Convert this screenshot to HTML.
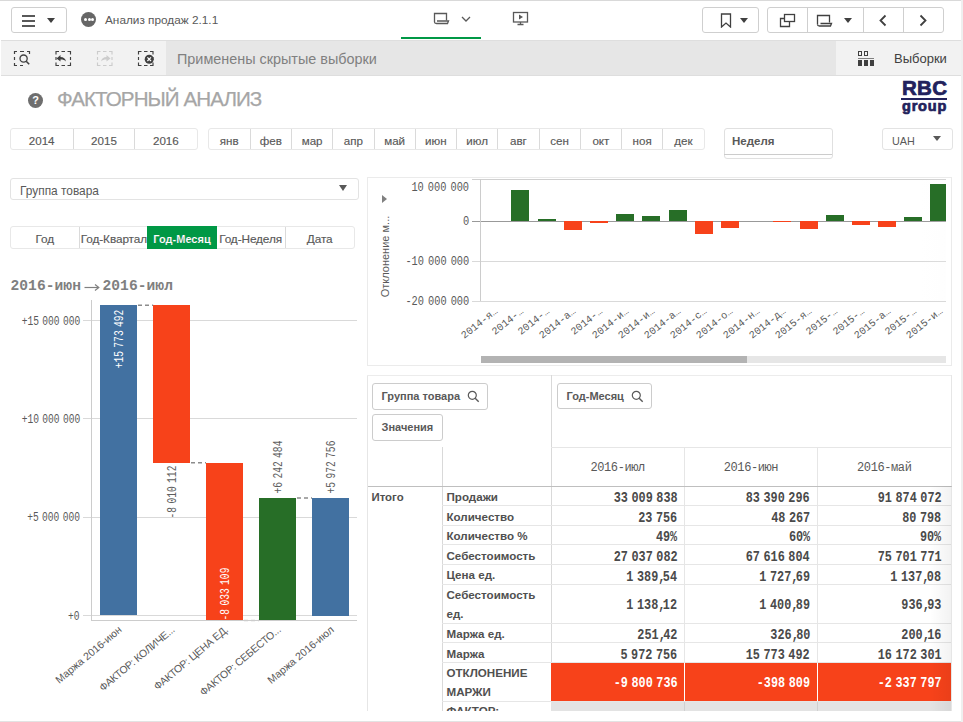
<!DOCTYPE html>
<html><head><meta charset="utf-8">
<style>
*{box-sizing:border-box}
html,body{margin:0;padding:0;width:963px;height:722px;overflow:hidden;background:#fff;font-family:"Liberation Sans",sans-serif;color:#404040}
.a{position:absolute}
.t{position:absolute;white-space:nowrap;line-height:1}
.btn{position:absolute;border:1px solid #cfcfcf;border-radius:3px;background:#fff}
.tri{position:absolute;width:0;height:0;border-left:4px solid transparent;border-right:4px solid transparent;border-top:5px solid #404040}
.seg{position:absolute;border:1px solid #e8e8e8;border-radius:3px;background:#fff;display:flex}
.seg div{height:100%;text-align:center;font-size:11.6px;color:#595959;border-left:1px solid #dadada;-webkit-text-stroke:0.15px #595959;line-height:24px}
.seg div:first-child{border-left:none}
.mono{font-family:"Liberation Mono",monospace}
</style></head>
<body>
<!-- top bar -->
<div class="a" style="left:0;top:0;width:963px;height:1px;background:#d9d9d9"></div>
<div class="btn" style="left:11px;top:7px;width:56px;height:26px"></div>
<div class="a" style="left:22px;top:15px;width:13px;height:2px;background:#595959"></div>
<div class="a" style="left:22px;top:20px;width:13px;height:2px;background:#595959"></div>
<div class="a" style="left:22px;top:25px;width:13px;height:2px;background:#595959"></div>
<div class="tri" style="left:47px;top:18px"></div>
<div class="a" style="left:81px;top:12px;width:15px;height:15px;border-radius:50%;background:#666"></div>
<div class="a" style="left:84px;top:18px;width:3px;height:3px;border-radius:50%;background:#fff"></div>
<div class="a" style="left:87px;top:18px;width:3px;height:3px;border-radius:50%;background:#fff;margin-left:0.5px"></div>
<div class="a" style="left:91px;top:18px;width:3px;height:3px;border-radius:50%;background:#fff"></div>
<div class="t" style="left:105px;top:15px;font-size:11.8px;color:#595959">Анализ продаж 2.1.1</div>

<!-- sheet tab -->
<svg class="a" style="left:433px;top:12px" width="18" height="13" viewBox="0 0 18 13"><path d="M1.5 10V1.5h12v7" fill="none" stroke="#595959" stroke-width="1.3"/><path d="M1.5 10c0 1 1 1.5 2 1.5h11l1-2.5h-11.5" fill="none" stroke="#595959" stroke-width="1.3"/></svg>
<svg class="a" style="left:461px;top:16px" width="10" height="7" viewBox="0 0 10 7"><path d="M1 1l4 4 4-4" fill="none" stroke="#595959" stroke-width="1.3"/></svg>
<div class="a" style="left:401px;top:37px;width:80px;height:2px;background:#009845"></div>
<svg class="a" style="left:512px;top:11px" width="17" height="15" viewBox="0 0 17 15"><rect x="1.5" y="1.5" width="14" height="9.5" fill="none" stroke="#595959" stroke-width="1.3"/><path d="M7 3.5v5l4-2.5z" fill="#595959"/><path d="M8.5 11v2M5.5 13.5h6" stroke="#595959" stroke-width="1.3"/></svg>

<!-- right buttons -->
<div class="btn" style="left:702px;top:7px;width:57px;height:26px"></div>
<svg class="a" style="left:720px;top:13px" width="12" height="15" viewBox="0 0 12 15"><path d="M1.5 1h9v13l-4.5-4-4.5 4z" fill="none" stroke="#404040" stroke-width="1.3"/></svg>
<div class="tri" style="left:740px;top:18px"></div>
<div class="btn" style="left:767px;top:7px;width:177px;height:26px"></div>
<div class="a" style="left:807px;top:7px;width:1px;height:26px;background:#cfcfcf"></div>
<div class="a" style="left:863px;top:7px;width:1px;height:26px;background:#cfcfcf"></div>
<div class="a" style="left:903px;top:7px;width:1px;height:26px;background:#cfcfcf"></div>
<svg class="a" style="left:779px;top:13px" width="17" height="15" viewBox="0 0 17 15"><rect x="5.5" y="1.5" width="10" height="7" fill="none" stroke="#404040" stroke-width="1.3"/><path d="M5.5 5.5h-4v8h9v-5" fill="none" stroke="#404040" stroke-width="1.3"/></svg>
<svg class="a" style="left:816px;top:14px" width="18" height="13" viewBox="0 0 18 13"><path d="M1.5 10.5V1.5h12v7" fill="none" stroke="#404040" stroke-width="1.3"/><path d="M1.5 10.5c0 1 1 1.5 2 1.5h11l1-2.5h-11" fill="none" stroke="#404040" stroke-width="1.3"/></svg>
<div class="tri" style="left:844px;top:18px"></div>
<svg class="a" style="left:878px;top:14px" width="10" height="13" viewBox="0 0 10 13"><path d="M7.5 1.5l-5 5 5 5" fill="none" stroke="#404040" stroke-width="1.8"/></svg>
<svg class="a" style="left:918px;top:14px" width="10" height="13" viewBox="0 0 10 13"><path d="M2.5 1.5l5 5-5 5" fill="none" stroke="#404040" stroke-width="1.8"/></svg>

<!-- toolbar -->
<div class="a" style="left:1px;top:40px;width:960px;height:36px;background:#f2f2f2;border-top:1px solid #dedede;border-bottom:1px solid #dedede"></div>
<div class="a" style="left:166px;top:41px;width:670px;height:34px;background:#e6e6e6"></div>
<div class="t" style="left:177px;top:51.8px;font-size:14.4px;color:#808080">Применены скрытые выборки</div>
<svg class="a" style="left:0;top:40px" width="170" height="36" viewBox="0 40 170 36">
<path d="M14.5 54V51.5H17M20 51.5h4M27 51.5h2.5V54M14.5 57v3M14.5 63v2.5H17M20 65.5h3" fill="none" stroke="#404040" stroke-width="1.2"/>
<circle cx="23.6" cy="58.6" r="3.6" fill="none" stroke="#404040" stroke-width="1.3"/><path d="M26.2 61.2l3 3" stroke="#404040" stroke-width="1.6"/>
<path transform="translate(55.5 51)" d="M0.5 3.5V0.5H3.5M6 0.5h3.5M12 0.5h3V3.5M15 6v3M15 11.5v3h-3M9.5 14.5H6M3.5 14.5h-3v-3M0.5 9V6" fill="none" stroke="#404040" stroke-width="1.15"/>
<path d="M56.5 58.5l4-3.5v2c3 0 5 1.5 5.5 4.5-1.2-1.4-3-2-5.5-2v2z" fill="#404040"/>
<path transform="translate(97 51)" d="M0.5 3.5V0.5H3.5M6 0.5h3.5M12 0.5h3V3.5M15 6v3M15 11.5v3h-3M9.5 14.5H6M3.5 14.5h-3v-3M0.5 9V6" fill="none" stroke="#cccccc" stroke-width="1.15"/>
<path d="M110.5 58.5l-4-3.5v2c-3 0-5 1.5-5.5 4.5 1.2-1.4 3-2 5.5-2v2z" fill="#cccccc"/>
<path transform="translate(138 51)" d="M0.5 3.5V0.5H3.5M6 0.5h3.5M12 0.5h3V3.5M15 6v3M15 11.5v3h-3M9.5 14.5H6M3.5 14.5h-3v-3M0.5 9V6" fill="none" stroke="#404040" stroke-width="1.15"/>
<circle cx="149.2" cy="59.2" r="4.5" fill="#404040"/><path d="M147.4 57.4l3.6 3.6M151 57.4l-3.6 3.6" stroke="#fff" stroke-width="1.2"/>
</svg>
<svg class="a" style="left:857px;top:50px" width="18" height="17" viewBox="0 0 18 17">
<rect x="1.5" y="1.5" width="3" height="4" fill="none" stroke="#404040" stroke-width="1"/>
<rect x="7.5" y="1.5" width="3" height="4" fill="none" stroke="#404040" stroke-width="1"/>
<rect x="1" y="8" width="16" height="1" fill="#808080"/>
<rect x="1" y="10" width="4" height="6" fill="#404040"/><rect x="7" y="10" width="4" height="6" fill="#404040"/><rect x="13" y="10" width="4" height="6" fill="#404040"/>
</svg>
<div class="t" style="left:894px;top:52px;font-size:13px;color:#404040">Выборки</div>

<div class="a" style="left:28px;top:93px;width:15px;height:15px;border-radius:50%;background:#6e6e6e;color:#fff;font-weight:bold;font-size:11px;line-height:15px;text-align:center">?</div>
<div class="t" style="left:57px;top:88.5px;font-size:20.6px;color:#a6a6a6;letter-spacing:-0.95px;-webkit-text-stroke:0.25px #a6a6a6">ФАКТОРНЫЙ АНАЛИЗ</div>
<div class="t" style="left:902px;top:77.5px;font-size:20.5px;font-weight:bold;color:#22225c;letter-spacing:0.3px;-webkit-text-stroke:0.7px #22225c">RBC</div>
<div class="a" style="left:901px;top:97.8px;width:45.5px;height:2.6px;background:#22225c"></div>
<div class="t" style="left:902px;top:98.8px;font-size:14.5px;font-weight:bold;color:#22225c;letter-spacing:0.8px;-webkit-text-stroke:0.7px #22225c">group</div>
<div class="seg" style="left:9.5px;top:128px;width:188px;height:22px"><div style="width:63px">2014</div><div style="width:62px">2015</div><div style="width:63px">2016</div></div>
<div class="seg" style="left:207.5px;top:128px;width:497px;height:22px"><div style="width:41.4px">янв</div><div style="width:41.4px">фев</div><div style="width:41.4px">мар</div><div style="width:41.4px">апр</div><div style="width:41.4px">май</div><div style="width:41.4px">июн</div><div style="width:41.4px">июл</div><div style="width:41.4px">авг</div><div style="width:41.4px">сен</div><div style="width:41.4px">окт</div><div style="width:41.4px">ноя</div><div style="width:41.4px">дек</div></div>
<div class="a" style="left:723.5px;top:128px;width:109px;height:30.5px;border:1px solid #e0e0e0;border-radius:3px"></div>
<div class="a" style="left:724px;top:153.5px;width:108px;height:1px;background:#cccccc"></div>
<div class="t" style="left:732px;top:136px;font-size:11.5px;font-weight:bold;color:#595959">Неделя</div>
<div class="a" style="left:881.5px;top:128px;width:71px;height:22px;border:1px solid #e3e3e3;border-radius:3px"></div>
<div class="t" style="left:892px;top:135.5px;font-size:10.8px;color:#595959">UAH</div>
<div class="tri" style="left:933px;top:135.5px;border-left-width:4.5px;border-right-width:4.5px;border-top-width:5.5px;border-top-color:#595959"></div>
<div class="a" style="left:9.5px;top:177.5px;width:349px;height:22px;border:1px solid #e3e3e3;border-radius:3px"></div>
<div class="t" style="left:20px;top:185.5px;font-size:11.9px;color:#595959">Группа товара</div>
<div class="tri" style="left:339px;top:185px;border-left-width:4.5px;border-right-width:4.5px;border-top-width:6px;border-top-color:#595959"></div>
<div class="seg" style="left:9.5px;top:226px;width:345px;height:22.5px"><div style="width:69px;font-size:11.8px;letter-spacing:-0.1px;">Год</div><div style="width:69px;font-size:11.8px;letter-spacing:-0.1px;">Год-Квартал</div><div style="width:69px;color:#fff;font-weight:bold;font-size:11px;border-left:none;position:relative"><span style="position:absolute;left:-1px;top:-1px;width:70px;height:22.5px;background:#009845"></span><span style="position:relative">Год-Месяц</span></div><div style="width:69px;font-size:11.8px;letter-spacing:-0.1px;border-left:none">Год-Неделя</div><div style="width:69px;font-size:11.8px;letter-spacing:-0.1px;">Дата</div></div>
<div class="t mono" style="left:10.5px;top:279px;font-size:14.6px;font-weight:bold;color:#808080;letter-spacing:0.05px">2016-июн</div>
<svg class="a" style="left:84px;top:283px" width="16" height="9" viewBox="0 0 16 9"><path d="M0.5 4.5h14" stroke="#808080" stroke-width="1.2"/><path d="M11 1.5l3.8 3-3.8 3" fill="none" stroke="#808080" stroke-width="1.2"/></svg>
<div class="t mono" style="left:102.5px;top:279px;font-size:14.6px;font-weight:bold;color:#808080;letter-spacing:0.05px">2016-июл</div>
<div class="a" style="left:83px;top:320.0px;width:274px;height:1px;background:#d9d9d9"></div>
<div class="t mono" style="right:883.2px;top:316.5px;font-size:12px;line-height:10px;color:#595959;word-spacing:-3px;transform:scaleX(0.8);transform-origin:100% 50%">+15 000 000</div>
<div class="a" style="left:83px;top:418.3px;width:274px;height:1px;background:#d9d9d9"></div>
<div class="t mono" style="right:883.2px;top:414.8px;font-size:12px;line-height:10px;color:#595959;word-spacing:-3px;transform:scaleX(0.8);transform-origin:100% 50%">+10 000 000</div>
<div class="a" style="left:83px;top:516.7px;width:274px;height:1px;background:#d9d9d9"></div>
<div class="t mono" style="right:883.2px;top:513.2px;font-size:12px;line-height:10px;color:#595959;word-spacing:-3px;transform:scaleX(0.8);transform-origin:100% 50%">+5 000 000</div>
<div class="a" style="left:83px;top:615.0px;width:274px;height:1px;background:#d9d9d9"></div>
<div class="t mono" style="right:883.2px;top:611.5px;font-size:12px;line-height:10px;color:#595959;word-spacing:-3px;transform:scaleX(0.8);transform-origin:100% 50%">+0</div>
<div class="a" style="left:91px;top:300px;width:1px;height:321px;background:#cccccc"></div>
<div class="a" style="left:91px;top:620px;width:266px;height:1px;background:#cccccc"></div>
<div class="a" style="left:100.2px;top:305.3px;width:36.8px;height:310.2px;background:#4271a1"></div>
<div class="a" style="left:153.2px;top:305.3px;width:36.8px;height:157.5px;background:#f7421a"></div>
<div class="a" style="left:206.0px;top:462.8px;width:36.8px;height:157.2px;background:#f7421a"></div>
<div class="a" style="left:259.2px;top:498.0px;width:36.8px;height:122.0px;background:#276e27"></div>
<div class="a" style="left:312.0px;top:498.0px;width:36.8px;height:117.5px;background:#4271a1"></div>
<svg class="a" style="left:0;top:0" width="963" height="722"><line x1="138" y1="305.3" x2="153.2" y2="305.3" stroke="#8c8c8c" stroke-width="1.5" stroke-dasharray="4 3"/><line x1="191" y1="462.8" x2="206" y2="462.8" stroke="#8c8c8c" stroke-width="1.5" stroke-dasharray="4 3"/><line x1="297" y1="498.0" x2="312" y2="498.0" stroke="#8c8c8c" stroke-width="1.5" stroke-dasharray="4 3"/><line x1="244" y1="620.5" x2="259" y2="620.5" stroke="#cccccc" stroke-width="1.5" stroke-dasharray="4 3"/></svg>
<div class="t mono" style="left:70.4px;top:334.0px;width:100px;text-align:center;font-size:12px;line-height:10px;color:#fff;transform:rotate(-90deg) scaleX(0.8);word-spacing:-3px">+15 773 492</div>
<div class="t mono" style="left:123.4px;top:486.5px;width:100px;text-align:center;font-size:12px;line-height:10px;color:#5e5e5e;transform:rotate(-90deg) scaleX(0.8);word-spacing:-3px">-8 010 112</div>
<div class="t mono" style="left:176.2px;top:588.5px;width:100px;text-align:center;font-size:12px;line-height:10px;color:#fff;transform:rotate(-90deg) scaleX(0.8);word-spacing:-3px">-8 033 109</div>
<div class="t mono" style="left:229.4px;top:461.8px;width:100px;text-align:center;font-size:12px;line-height:10px;color:#5e5e5e;transform:rotate(-90deg) scaleX(0.8);word-spacing:-3px">+6 242 484</div>
<div class="t mono" style="left:282.3px;top:461.8px;width:100px;text-align:center;font-size:12px;line-height:10px;color:#5e5e5e;transform:rotate(-90deg) scaleX(0.8);word-spacing:-3px">+5 972 756</div>
<div class="t" style="right:846.4px;top:623.5px;font-size:10.5px;line-height:10px;color:#595959;letter-spacing:0;transform-origin:100% 0;transform:rotate(-40deg)">Маржа 2016-июн</div>
<div class="t" style="right:793.4px;top:623.5px;font-size:10.5px;line-height:10px;color:#595959;letter-spacing:-0.25px;transform-origin:100% 0;transform:rotate(-40deg)">ФАКТОР: КОЛИЧЕ...</div>
<div class="t" style="right:740.4px;top:623.5px;font-size:10.5px;line-height:10px;color:#595959;letter-spacing:-0.25px;transform-origin:100% 0;transform:rotate(-40deg)">ФАКТОР: ЦЕНА ЕД.</div>
<div class="t" style="right:687.4px;top:623.5px;font-size:10.5px;line-height:10px;color:#595959;letter-spacing:-0.25px;transform-origin:100% 0;transform:rotate(-40deg)">ФАКТОР: СЕБЕСТО...</div>
<div class="t" style="right:634.4px;top:623.5px;font-size:10.5px;line-height:10px;color:#595959;letter-spacing:0;transform-origin:100% 0;transform:rotate(-40deg)">Маржа 2016-июл</div>
<div class="a" style="left:367px;top:177px;width:585px;height:189px;border:1px solid #ebebeb"></div>
<div class="a" style="left:382px;top:195px;width:0;height:0;border-top:4px solid transparent;border-bottom:4px solid transparent;border-left:5.5px solid #808080"></div>
<div class="t" style="left:334.5px;top:251px;width:100px;text-align:center;font-size:11px;line-height:11px;color:#595959;transform:rotate(-90deg)">Отклонение м...</div>
<div class="t mono" style="right:493.8px;top:182.8px;font-size:12px;line-height:10px;color:#595959;word-spacing:-2.5px;transform:scaleX(0.86);transform-origin:100% 50%">10 000 000</div>
<div class="t mono" style="right:493.8px;top:217.0px;font-size:12px;line-height:10px;color:#595959;word-spacing:-2.5px;transform:scaleX(0.86);transform-origin:100% 50%">0</div>
<div class="a" style="left:472px;top:220.7px;width:474px;height:1px;background:#999"></div>
<div class="t mono" style="right:493.8px;top:257.0px;font-size:12px;line-height:10px;color:#595959;word-spacing:-2.5px;transform:scaleX(0.86);transform-origin:100% 50%">-10 000 000</div>
<div class="a" style="left:472px;top:260.7px;width:474px;height:1px;background:#d9d9d9"></div>
<div class="t mono" style="right:493.8px;top:297.0px;font-size:12px;line-height:10px;color:#595959;word-spacing:-2.5px;transform:scaleX(0.86);transform-origin:100% 50%">-20 000 000</div>
<div class="a" style="left:472px;top:300.7px;width:474px;height:1px;background:#d9d9d9"></div>
<div class="a" style="left:472px;top:179px;width:474px;height:1px;background:#d0d0d0"></div>
<div class="a" style="left:480px;top:179px;width:1px;height:122px;background:#cccccc"></div>
<div class="a" style="left:920px;top:179px;width:26px;height:122px;background:linear-gradient(to right,rgba(255,255,255,0),rgba(245,245,245,0.12))"></div>
<div class="a" style="left:511.3px;top:190px;width:18.2px;height:31.2px;background:#276e27"></div>
<div class="a" style="left:537.5px;top:219px;width:18.2px;height:2.2px;background:#276e27"></div>
<div class="a" style="left:563.7px;top:221.2px;width:18.2px;height:9.1px;background:#f7421a"></div>
<div class="a" style="left:589.9px;top:221.2px;width:18.2px;height:1.8px;background:#f7421a"></div>
<div class="a" style="left:616.1px;top:214px;width:18.2px;height:7.2px;background:#276e27"></div>
<div class="a" style="left:642.3px;top:215.8px;width:18.2px;height:5.4px;background:#276e27"></div>
<div class="a" style="left:668.5px;top:210.3px;width:18.2px;height:10.9px;background:#276e27"></div>
<div class="a" style="left:694.7px;top:221.2px;width:18.2px;height:13.0px;background:#f7421a"></div>
<div class="a" style="left:720.9px;top:221.2px;width:18.2px;height:6.5px;background:#f7421a"></div>
<div class="a" style="left:773.3px;top:221.2px;width:18.2px;height:0.8px;background:#f7421a"></div>
<div class="a" style="left:799.5px;top:221.2px;width:18.2px;height:7.6px;background:#f7421a"></div>
<div class="a" style="left:825.7px;top:214.6px;width:18.2px;height:6.6px;background:#276e27"></div>
<div class="a" style="left:851.9px;top:221.2px;width:18.2px;height:3.5px;background:#f7421a"></div>
<div class="a" style="left:878.1px;top:221.2px;width:18.2px;height:5.7px;background:#f7421a"></div>
<div class="a" style="left:904.3px;top:217.3px;width:18.2px;height:3.9px;background:#276e27"></div>
<div class="a" style="left:930.0px;top:183.7px;width:16px;height:37.5px;background:#276e27"></div>
<div class="t mono" style="right:470.3px;top:305.5px;font-size:10.3px;line-height:10px;color:#595959;transform-origin:100% 0;transform:rotate(-38.5deg)">2014-я<span style="font-family:'Liberation Sans';font-size:9px;letter-spacing:-0.5px">...</span></div>
<div class="t mono" style="right:444.1px;top:305.5px;font-size:10.3px;line-height:10px;color:#595959;transform-origin:100% 0;transform:rotate(-38.5deg)">2014-<span style="font-family:'Liberation Sans';font-size:9px;letter-spacing:-0.5px">...</span></div>
<div class="t mono" style="right:417.9px;top:305.5px;font-size:10.3px;line-height:10px;color:#595959;transform-origin:100% 0;transform:rotate(-38.5deg)">2014-<span style="font-family:'Liberation Sans';font-size:9px;letter-spacing:-0.5px">...</span></div>
<div class="t mono" style="right:391.7px;top:305.5px;font-size:10.3px;line-height:10px;color:#595959;transform-origin:100% 0;transform:rotate(-38.5deg)">2014-а<span style="font-family:'Liberation Sans';font-size:9px;letter-spacing:-0.5px">...</span></div>
<div class="t mono" style="right:365.5px;top:305.5px;font-size:10.3px;line-height:10px;color:#595959;transform-origin:100% 0;transform:rotate(-38.5deg)">2014-<span style="font-family:'Liberation Sans';font-size:9px;letter-spacing:-0.5px">...</span></div>
<div class="t mono" style="right:339.3px;top:305.5px;font-size:10.3px;line-height:10px;color:#595959;transform-origin:100% 0;transform:rotate(-38.5deg)">2014-и<span style="font-family:'Liberation Sans';font-size:9px;letter-spacing:-0.5px">...</span></div>
<div class="t mono" style="right:313.1px;top:305.5px;font-size:10.3px;line-height:10px;color:#595959;transform-origin:100% 0;transform:rotate(-38.5deg)">2014-и<span style="font-family:'Liberation Sans';font-size:9px;letter-spacing:-0.5px">...</span></div>
<div class="t mono" style="right:286.9px;top:305.5px;font-size:10.3px;line-height:10px;color:#595959;transform-origin:100% 0;transform:rotate(-38.5deg)">2014-а<span style="font-family:'Liberation Sans';font-size:9px;letter-spacing:-0.5px">...</span></div>
<div class="t mono" style="right:260.7px;top:305.5px;font-size:10.3px;line-height:10px;color:#595959;transform-origin:100% 0;transform:rotate(-38.5deg)">2014-с<span style="font-family:'Liberation Sans';font-size:9px;letter-spacing:-0.5px">...</span></div>
<div class="t mono" style="right:234.5px;top:305.5px;font-size:10.3px;line-height:10px;color:#595959;transform-origin:100% 0;transform:rotate(-38.5deg)">2014-о<span style="font-family:'Liberation Sans';font-size:9px;letter-spacing:-0.5px">...</span></div>
<div class="t mono" style="right:208.3px;top:305.5px;font-size:10.3px;line-height:10px;color:#595959;transform-origin:100% 0;transform:rotate(-38.5deg)">2014-н<span style="font-family:'Liberation Sans';font-size:9px;letter-spacing:-0.5px">...</span></div>
<div class="t mono" style="right:182.1px;top:305.5px;font-size:10.3px;line-height:10px;color:#595959;transform-origin:100% 0;transform:rotate(-38.5deg)">2014-д<span style="font-family:'Liberation Sans';font-size:9px;letter-spacing:-0.5px">...</span></div>
<div class="t mono" style="right:155.9px;top:305.5px;font-size:10.3px;line-height:10px;color:#595959;transform-origin:100% 0;transform:rotate(-38.5deg)">2015-я<span style="font-family:'Liberation Sans';font-size:9px;letter-spacing:-0.5px">...</span></div>
<div class="t mono" style="right:129.7px;top:305.5px;font-size:10.3px;line-height:10px;color:#595959;transform-origin:100% 0;transform:rotate(-38.5deg)">2015-<span style="font-family:'Liberation Sans';font-size:9px;letter-spacing:-0.5px">...</span></div>
<div class="t mono" style="right:103.5px;top:305.5px;font-size:10.3px;line-height:10px;color:#595959;transform-origin:100% 0;transform:rotate(-38.5deg)">2015-<span style="font-family:'Liberation Sans';font-size:9px;letter-spacing:-0.5px">...</span></div>
<div class="t mono" style="right:77.3px;top:305.5px;font-size:10.3px;line-height:10px;color:#595959;transform-origin:100% 0;transform:rotate(-38.5deg)">2015-а<span style="font-family:'Liberation Sans';font-size:9px;letter-spacing:-0.5px">...</span></div>
<div class="t mono" style="right:51.1px;top:305.5px;font-size:10.3px;line-height:10px;color:#595959;transform-origin:100% 0;transform:rotate(-38.5deg)">2015-<span style="font-family:'Liberation Sans';font-size:9px;letter-spacing:-0.5px">...</span></div>
<div class="t mono" style="right:24.9px;top:305.5px;font-size:10.3px;line-height:10px;color:#595959;transform-origin:100% 0;transform:rotate(-38.5deg)">2015-и<span style="font-family:'Liberation Sans';font-size:9px;letter-spacing:-0.5px">...</span></div>
<div class="a" style="left:481px;top:355.5px;width:465px;height:7.5px;background:#e6e6e6"></div>
<div class="a" style="left:481px;top:355.5px;width:266px;height:7.5px;background:#b3b3b3"></div>
<div class="a" style="left:367px;top:374.5px;width:1px;height:337px;background:#e6e6e6"></div>
<div class="a" style="left:367px;top:374.5px;width:585px;height:1px;background:#ececec"></div>
<div class="a" style="left:372px;top:383px;width:115.5px;height:26.5px;border:1px solid #cccccc;border-radius:3px;background:#fff"></div>
<div class="t" style="left:381.5px;top:391px;font-size:11px;font-weight:bold;color:#595959">Группа товара</div>
<svg class="a" style="left:466.5px;top:389.5px" width="13" height="13" viewBox="0 0 13 13"><circle cx="5.3" cy="5.3" r="4" fill="none" stroke="#595959" stroke-width="1.2"/><path d="M8.2 8.2l3.5 3.5" stroke="#595959" stroke-width="1.4"/></svg>
<div class="a" style="left:372px;top:414px;width:71px;height:26.5px;border:1px solid #cccccc;border-radius:3px;background:#fff"></div>
<div class="t" style="left:381.5px;top:422px;font-size:11px;font-weight:bold;color:#595959">Значения</div>
<div class="a" style="left:557px;top:383px;width:94.5px;height:26px;border:1px solid #cccccc;border-radius:3px;background:#fff"></div>
<div class="t" style="left:566.5px;top:391px;font-size:11px;font-weight:bold;color:#595959">Год-Месяц</div>
<svg class="a" style="left:630.5px;top:389.5px" width="13" height="13" viewBox="0 0 13 13"><circle cx="5.3" cy="5.3" r="4" fill="none" stroke="#595959" stroke-width="1.2"/><path d="M8.2 8.2l3.5 3.5" stroke="#595959" stroke-width="1.4"/></svg>
<div class="a" style="left:550.5px;top:375px;width:1px;height:336px;background:#d9d9d9"></div>
<div class="a" style="left:442px;top:447px;width:1px;height:264px;background:#d9d9d9"></div>
<div class="a" style="left:551px;top:447.3px;width:400px;height:1px;background:#e6e6e6"></div>
<div class="a" style="left:684px;top:447.3px;width:1px;height:264px;background:#e6e6e6"></div>
<div class="a" style="left:817px;top:447.3px;width:1px;height:264px;background:#e6e6e6"></div>
<div class="a" style="left:951px;top:375px;width:1px;height:336px;background:#e6e6e6"></div>
<div class="a" style="left:367.5px;top:485.5px;width:584px;height:1px;background:#bfbfbf"></div>
<div class="t" style="left:551.0px;width:133.3px;text-align:center;top:461.5px;font-size:12px;color:#595959;font-family:'Liberation Mono';letter-spacing:-0.4px">2016-июл</div>
<div class="t" style="left:684.3px;width:133.3px;text-align:center;top:461.5px;font-size:12px;color:#595959;font-family:'Liberation Mono';letter-spacing:-0.4px">2016-июн</div>
<div class="t" style="left:817.6px;width:133.3px;text-align:center;top:461.5px;font-size:12px;color:#595959;font-family:'Liberation Mono';letter-spacing:-0.4px">2016-май</div>
<div class="t" style="left:371.5px;top:491.5px;font-size:11.4px;font-weight:bold;color:#505050">Итого</div>
<div class="t" style="left:446.5px;top:486.9px;font-size:11.6px;line-height:19px;font-weight:bold;color:#505050;white-space:normal;width:104px">Продажи</div>
<div class="t mono" style="right:285.7px;top:492.1px;font-size:14px;line-height:13px;font-weight:bold;color:#4a4a4a;word-spacing:-4.2px;transform:scaleX(0.845);transform-origin:100% 50%">33 009 838</div>
<div class="t mono" style="right:153.0px;top:492.1px;font-size:14px;line-height:13px;font-weight:bold;color:#4a4a4a;word-spacing:-4.2px;transform:scaleX(0.845);transform-origin:100% 50%">83 390 296</div>
<div class="t mono" style="right:21.7px;top:492.1px;font-size:14px;line-height:13px;font-weight:bold;color:#4a4a4a;word-spacing:-4.2px;transform:scaleX(0.845);transform-origin:100% 50%">91 874 072</div>
<div class="a" style="left:442px;top:505.1px;width:509px;height:1px;background:#e6e6e6"></div>
<div class="t" style="left:446.5px;top:506.5px;font-size:11.6px;line-height:19px;font-weight:bold;color:#505050;white-space:normal;width:104px">Количество</div>
<div class="t mono" style="right:285.7px;top:511.7px;font-size:14px;line-height:13px;font-weight:bold;color:#4a4a4a;word-spacing:-4.2px;transform:scaleX(0.845);transform-origin:100% 50%">23 756</div>
<div class="t mono" style="right:153.0px;top:511.7px;font-size:14px;line-height:13px;font-weight:bold;color:#4a4a4a;word-spacing:-4.2px;transform:scaleX(0.845);transform-origin:100% 50%">48 267</div>
<div class="t mono" style="right:21.7px;top:511.7px;font-size:14px;line-height:13px;font-weight:bold;color:#4a4a4a;word-spacing:-4.2px;transform:scaleX(0.845);transform-origin:100% 50%">80 798</div>
<div class="a" style="left:442px;top:524.7px;width:509px;height:1px;background:#e6e6e6"></div>
<div class="t" style="left:446.5px;top:526.1px;font-size:11.6px;line-height:19px;font-weight:bold;color:#505050;white-space:normal;width:104px">Количество %</div>
<div class="t mono" style="right:285.7px;top:531.3px;font-size:14px;line-height:13px;font-weight:bold;color:#4a4a4a;word-spacing:-4.2px;transform:scaleX(0.845);transform-origin:100% 50%">49%</div>
<div class="t mono" style="right:153.0px;top:531.3px;font-size:14px;line-height:13px;font-weight:bold;color:#4a4a4a;word-spacing:-4.2px;transform:scaleX(0.845);transform-origin:100% 50%">60%</div>
<div class="t mono" style="right:21.7px;top:531.3px;font-size:14px;line-height:13px;font-weight:bold;color:#4a4a4a;word-spacing:-4.2px;transform:scaleX(0.845);transform-origin:100% 50%">90%</div>
<div class="a" style="left:442px;top:544.3px;width:509px;height:1px;background:#e6e6e6"></div>
<div class="t" style="left:446.5px;top:545.7px;font-size:11.6px;line-height:19px;font-weight:bold;color:#505050;white-space:normal;width:104px">Себестоимость</div>
<div class="t mono" style="right:285.7px;top:550.9px;font-size:14px;line-height:13px;font-weight:bold;color:#4a4a4a;word-spacing:-4.2px;transform:scaleX(0.845);transform-origin:100% 50%">27 037 082</div>
<div class="t mono" style="right:153.0px;top:550.9px;font-size:14px;line-height:13px;font-weight:bold;color:#4a4a4a;word-spacing:-4.2px;transform:scaleX(0.845);transform-origin:100% 50%">67 616 804</div>
<div class="t mono" style="right:21.7px;top:550.9px;font-size:14px;line-height:13px;font-weight:bold;color:#4a4a4a;word-spacing:-4.2px;transform:scaleX(0.845);transform-origin:100% 50%">75 701 771</div>
<div class="a" style="left:442px;top:563.9px;width:509px;height:1px;background:#e6e6e6"></div>
<div class="t" style="left:446.5px;top:565.3px;font-size:11.6px;line-height:19px;font-weight:bold;color:#505050;white-space:normal;width:104px">Цена ед.</div>
<div class="t mono" style="right:285.7px;top:570.5px;font-size:14px;line-height:13px;font-weight:bold;color:#4a4a4a;word-spacing:-4.2px;transform:scaleX(0.845);transform-origin:100% 50%">1 389<span style='letter-spacing:-3px'>,</span>54</div>
<div class="t mono" style="right:153.0px;top:570.5px;font-size:14px;line-height:13px;font-weight:bold;color:#4a4a4a;word-spacing:-4.2px;transform:scaleX(0.845);transform-origin:100% 50%">1 727<span style='letter-spacing:-3px'>,</span>69</div>
<div class="t mono" style="right:21.7px;top:570.5px;font-size:14px;line-height:13px;font-weight:bold;color:#4a4a4a;word-spacing:-4.2px;transform:scaleX(0.845);transform-origin:100% 50%">1 137<span style='letter-spacing:-3px'>,</span>08</div>
<div class="a" style="left:442px;top:583.5px;width:509px;height:1px;background:#e6e6e6"></div>
<div class="t" style="left:446.5px;top:584.9px;font-size:11.6px;line-height:19px;font-weight:bold;color:#505050;white-space:normal;width:104px">Себестоимость<br>ед.</div>
<div class="t mono" style="right:285.7px;top:598.9px;font-size:14px;line-height:13px;font-weight:bold;color:#4a4a4a;word-spacing:-4.2px;transform:scaleX(0.845);transform-origin:100% 50%">1 138<span style='letter-spacing:-3px'>,</span>12</div>
<div class="t mono" style="right:153.0px;top:598.9px;font-size:14px;line-height:13px;font-weight:bold;color:#4a4a4a;word-spacing:-4.2px;transform:scaleX(0.845);transform-origin:100% 50%">1 400<span style='letter-spacing:-3px'>,</span>89</div>
<div class="t mono" style="right:21.7px;top:598.9px;font-size:14px;line-height:13px;font-weight:bold;color:#4a4a4a;word-spacing:-4.2px;transform:scaleX(0.845);transform-origin:100% 50%">936<span style='letter-spacing:-3px'>,</span>93</div>
<div class="a" style="left:442px;top:622.7px;width:509px;height:1px;background:#e6e6e6"></div>
<div class="t" style="left:446.5px;top:624.1px;font-size:11.6px;line-height:19px;font-weight:bold;color:#505050;white-space:normal;width:104px">Маржа ед.</div>
<div class="t mono" style="right:285.7px;top:629.3px;font-size:14px;line-height:13px;font-weight:bold;color:#4a4a4a;word-spacing:-4.2px;transform:scaleX(0.845);transform-origin:100% 50%">251<span style='letter-spacing:-3px'>,</span>42</div>
<div class="t mono" style="right:153.0px;top:629.3px;font-size:14px;line-height:13px;font-weight:bold;color:#4a4a4a;word-spacing:-4.2px;transform:scaleX(0.845);transform-origin:100% 50%">326<span style='letter-spacing:-3px'>,</span>80</div>
<div class="t mono" style="right:21.7px;top:629.3px;font-size:14px;line-height:13px;font-weight:bold;color:#4a4a4a;word-spacing:-4.2px;transform:scaleX(0.845);transform-origin:100% 50%">200<span style='letter-spacing:-3px'>,</span>16</div>
<div class="a" style="left:442px;top:642.3px;width:509px;height:1px;background:#e6e6e6"></div>
<div class="t" style="left:446.5px;top:643.7px;font-size:11.6px;line-height:19px;font-weight:bold;color:#505050;white-space:normal;width:104px">Маржа</div>
<div class="t mono" style="right:285.7px;top:648.9px;font-size:14px;line-height:13px;font-weight:bold;color:#4a4a4a;word-spacing:-4.2px;transform:scaleX(0.845);transform-origin:100% 50%">5 972 756</div>
<div class="t mono" style="right:153.0px;top:648.9px;font-size:14px;line-height:13px;font-weight:bold;color:#4a4a4a;word-spacing:-4.2px;transform:scaleX(0.845);transform-origin:100% 50%">15 773 492</div>
<div class="t mono" style="right:21.7px;top:648.9px;font-size:14px;line-height:13px;font-weight:bold;color:#4a4a4a;word-spacing:-4.2px;transform:scaleX(0.845);transform-origin:100% 50%">16 172 301</div>
<div class="a" style="left:551px;top:662.9px;width:400px;height:38.7px;background:#f7421a"></div>
<div class="a" style="left:684px;top:662.4px;width:1px;height:39.2px;background:#fff"></div>
<div class="a" style="left:817px;top:662.4px;width:1px;height:39.2px;background:#fff"></div>
<div class="a" style="left:442px;top:661.9px;width:509px;height:1px;background:#e6e6e6"></div>
<div class="t" style="left:446.5px;top:663.3px;font-size:11.6px;line-height:19px;font-weight:bold;color:#505050;white-space:normal;width:104px">ОТКЛОНЕНИЕ<br>МАРЖИ</div>
<div class="t mono" style="right:285.7px;top:677.3px;font-size:14px;line-height:13px;font-weight:bold;color:#fff;word-spacing:-4.2px;transform:scaleX(0.845);transform-origin:100% 50%">-9 800 736</div>
<div class="t mono" style="right:153.0px;top:677.3px;font-size:14px;line-height:13px;font-weight:bold;color:#fff;word-spacing:-4.2px;transform:scaleX(0.845);transform-origin:100% 50%">-398 809</div>
<div class="t mono" style="right:21.7px;top:677.3px;font-size:14px;line-height:13px;font-weight:bold;color:#fff;word-spacing:-4.2px;transform:scaleX(0.845);transform-origin:100% 50%">-2 337 797</div>
<div class="a" style="left:551px;top:702.1px;width:400px;height:39.2px;background:#e3e3e3"></div>
<div class="a" style="left:684px;top:701.6px;width:1px;height:39.2px;background:#d0d0d0"></div>
<div class="a" style="left:817px;top:701.6px;width:1px;height:39.2px;background:#d0d0d0"></div>
<div class="a" style="left:442px;top:701.1px;width:509px;height:1px;background:#e6e6e6"></div>
<div class="t" style="left:446.5px;top:701.0px;font-size:11.6px;line-height:19px;font-weight:bold;color:#505050;white-space:normal;width:104px">ФАКТОР:</div>
<div class="t mono" style="right:285.7px;top:716.5px;font-size:14px;line-height:13px;font-weight:bold;color:#4a4a4a;word-spacing:-4.2px;transform:scaleX(0.845);transform-origin:100% 50%"></div>
<div class="t mono" style="right:153.0px;top:716.5px;font-size:14px;line-height:13px;font-weight:bold;color:#4a4a4a;word-spacing:-4.2px;transform:scaleX(0.845);transform-origin:100% 50%"></div>
<div class="t mono" style="right:21.7px;top:716.5px;font-size:14px;line-height:13px;font-weight:bold;color:#4a4a4a;word-spacing:-4.2px;transform:scaleX(0.845);transform-origin:100% 50%"></div>
<div class="a" style="left:367px;top:711px;width:590px;height:10px;background:#fff"></div>
<div class="a" style="left:930px;top:486px;width:21px;height:225px;background:linear-gradient(to right,rgba(0,0,0,0),rgba(0,0,0,0.05))"></div>
<div class="a" style="left:961px;top:0;width:2px;height:722px;background:#efefef"></div>
<div class="a" style="left:0;top:721px;width:961px;height:1px;background:#e3e3e3"></div>
</body></html>
